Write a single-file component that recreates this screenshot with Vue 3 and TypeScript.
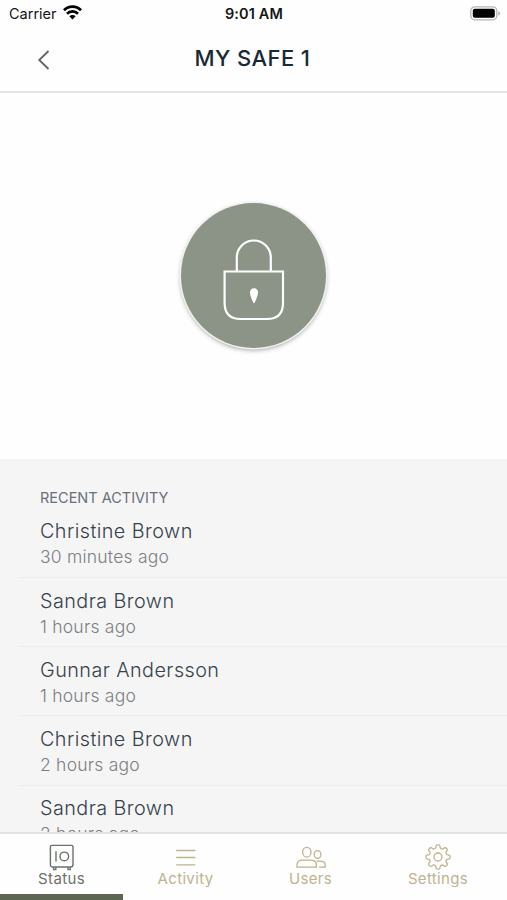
<script setup lang="ts">
interface Activity {
  name: string
  time: string
}

const activities: Activity[] = [
  { name: 'Christine Brown', time: '30 minutes ago' },
  { name: 'Sandra Brown', time: '1 hours ago' },
  { name: 'Gunnar Andersson', time: '1 hours ago' },
  { name: 'Christine Brown', time: '2 hours ago' },
  { name: 'Sandra Brown', time: '2 hours ago' },
]

// Outline of an eight-toothed cog with soft shoulders.
function cogPath(center: number, radius: number, depth: number): string {
  const steps = 128
  const points = Array.from({ length: steps }, (_, i) => {
    const angle = (i / steps) * Math.PI * 2
    const r = radius + depth * Math.tanh(2.4 * Math.cos(8 * angle))
    return `${(center + r * Math.sin(angle)).toFixed(2)} ${(center - r * Math.cos(angle)).toFixed(2)}`
  })
  return `M${points.join('L')}Z`
}

const cog = cogPath(14, 10.5, 1.6)
</script>

<template>
  <div class="screen">
    <div class="statusbar">
      <div class="carrier">
        <span>Carrier</span>
        <svg class="wifi" width="19" height="15" viewBox="0 0 19 15" fill="none" stroke="#000" stroke-width="2.7">
          <path d="M1 5.2A12 12 0 0 1 18 5.2" />
          <path d="M4 8.7A7.8 7.8 0 0 1 15 8.7" />
          <path d="M9.5 14.4 6.4 11.3A4.4 4.4 0 0 1 12.6 11.3Z" fill="#000" stroke="none" />
        </svg>
      </div>
      <span class="clock">9:01 AM</span>
      <svg class="battery" width="31" height="15" viewBox="0 0 31 15">
        <rect x="0.8" y="0.8" width="26" height="13" rx="4" fill="#fff" stroke="#b5b5b5" stroke-width="1.3" />
        <rect x="2.8" y="2.8" width="22" height="9" rx="2" fill="#000" />
        <path d="M28.4 5.2C30.5 6 30.5 8.7 28.4 9.5Z" fill="#aaa" />
      </svg>
    </div>

    <header class="header">
      <button class="back" aria-label="Back">
        <svg width="14" height="20" viewBox="0 0 14 20" fill="none" stroke="#62645f" stroke-width="1.8">
          <path d="M11.5 1 2.2 10 11.5 19" />
        </svg>
      </button>
      <h1>MY SAFE 1</h1>
    </header>

    <section class="hero">
      <button class="lock" aria-label="Unlock">
        <svg width="62" height="82" viewBox="0 0 62 82" fill="none" stroke="#fff" stroke-width="2.2">
          <path d="M13.8 32V18.5A17 17 0 0 1 47.8 18.5V32" />
          <path d="M1.6 32.5H60V64Q60 80 44 80H17.6Q1.6 80 1.6 64Z" />
          <path d="M31 49.2C33.8 49.2 35.4 51.5 35 54.2 34.6 57 32.9 60.8 32 63.2Q31 65 30 63.2C29.1 60.8 27.4 57 27 54.2 26.6 51.5 28.2 49.2 31 49.2Z" fill="#fff" stroke="none" />
        </svg>
      </button>
    </section>

    <section class="recent">
      <h2>RECENT ACTIVITY</h2>
      <ul>
        <li v-for="(item, i) in activities" :key="i">
          <div class="name">{{ item.name }}</div>
          <div class="time">{{ item.time }}</div>
        </li>
      </ul>
    </section>

    <nav class="tabs">
      <div class="tab active">
        <svg width="28" height="28" viewBox="0 0 28 28" fill="none" stroke="currentColor" stroke-width="1.4">
          <path d="M3.8 2.4H23.6Q25 2.4 25 3.8V21.5Q25 24 22.5 24H4.9Q2.4 24 2.4 21.5V3.8Q2.4 2.4 3.8 2.4ZM5.6 24V26.6H7.8V24M20 24V26.6H22.2V24M8 8.2V18.6" />
          <circle cx="16.3" cy="13.4" r="4.3" />
        </svg>
        <span>Status</span>
      </div>
      <div class="tab">
        <svg width="28" height="28" viewBox="0 0 28 28" fill="none" stroke="currentColor" stroke-width="1.3">
          <path d="M4.2 7.5H23.4M4.2 14.5H23.4M4.2 21.8H23.4" />
        </svg>
        <span>Activity</span>
      </div>
      <div class="tab">
        <svg width="30" height="28" viewBox="0 0 30 28" fill="none" stroke="currentColor" stroke-width="1.3">
          <ellipse cx="10.8" cy="9.2" rx="4.2" ry="4.9" />
          <path d="M1 24.2V21.8C1 18.8 3.5 17.2 7 17.2H14.4C17.9 17.2 20.4 18.8 20.4 21.8V24.2Z" />
          <ellipse cx="21.5" cy="11.5" rx="3.4" ry="3.9" />
          <path d="M20.5 18.2H23.5C27 18.2 29.2 19.6 29.2 21.9V24.2H23" />
        </svg>
        <span>Users</span>
      </div>
      <div class="tab">
        <svg width="28" height="28" viewBox="0 0 28 28" fill="none" stroke="currentColor" stroke-width="1.3" stroke-linejoin="round">
          <path :d="cog" />
          <circle cx="14" cy="14" r="4" />
        </svg>
        <span>Settings</span>
      </div>
    </nav>
  </div>
</template>

<style>
body {
  background: #fff;
}
</style>

<style scoped>
.screen {
  width: 507px;
  height: 900px;
  display: flex;
  flex-direction: column;
  overflow: hidden;
  background: #fefefe;
  font-family: Inter, 'Liberation Sans', sans-serif;
}
button {
  border: 0;
  padding: 0;
  margin: 0;
  background: none;
}
h1,
h2,
ul {
  margin: 0;
  padding: 0;
}
svg {
  display: block;
}
.statusbar {
  height: 28px;
  flex: none;
  box-sizing: border-box;
  padding: 0 6px 0 9px;
  display: grid;
  grid-template-columns: 1fr auto 1fr;
  align-items: center;
  color: #161616;
}
.carrier {
  display: flex;
  align-items: center;
  gap: 6px;
  font-size: 14.5px;
}
.carrier span,
.clock {
  margin-top: -1px;
}
.wifi {
  margin-top: -3px;
}
.clock {
  font-size: 14.5px;
  font-weight: 600;
  letter-spacing: 0.15px;
  margin-right: 2px;
}
.battery {
  justify-self: end;
  margin-top: -2px;
}
.header {
  height: 65px;
  flex: none;
  box-sizing: border-box;
  border-bottom: 2px solid #e4e4e4;
  display: grid;
  grid-template-columns: 80px 1fr 82px;
  align-items: center;
  padding-bottom: 4px;
}
.back {
  margin: 5px 0 0 37px;
  width: 14px;
}
h1 {
  font-size: 22px;
  line-height: 28px;
  font-weight: 550;
  letter-spacing: 0.4px;
  color: #182935;
  text-align: center;
}
.hero {
  height: 366px;
  flex: none;
  box-sizing: border-box;
  padding-bottom: 1px;
  display: flex;
  align-items: center;
  justify-content: center;
}
.lock {
  width: 145px;
  height: 145px;
  border-radius: 50%;
  background: #8b9487;
  box-shadow: 0 0 0 1.5px #f1f3f0, 0 2px 5px rgba(0, 0, 0, 0.4);
  display: flex;
  align-items: center;
  justify-content: center;
  padding-top: 9px;
  box-sizing: border-box;
}
.recent {
  flex: 1;
  min-height: 0;
  overflow: hidden;
  background: #f5f5f5;
  padding-top: 29px;
}
h2 {
  padding-left: 40px;
  font-size: 14.5px;
  line-height: 20px;
  font-weight: 400;
  color: #697078;
}
ul {
  list-style: none;
}
li {
  height: 69.2px;
  box-sizing: border-box;
  margin-left: 20px;
  padding: 9.5px 0 0 20px;
  border-bottom: 1px solid #ebecec;
}
li:first-child {
  height: 70px;
  padding-top: 10.3px;
}
.name {
  font-size: 19.8px;
  line-height: 26px;
  font-weight: 330;
  letter-spacing: 0.44px;
  color: #36424a;
}
.time {
  font-size: 17.5px;
  line-height: 25px;
  font-weight: 330;
  letter-spacing: 0.22px;
  color: #7b8083;
}
.tabs {
  height: 68px;
  flex: none;
  box-sizing: border-box;
  border-top: 2px solid #e2e2e2;
  display: grid;
  grid-template-columns: 123px 125px 125px 130px;
  background: #fefefe;
}
.tab {
  display: flex;
  flex-direction: column;
  align-items: center;
  padding-top: 9px;
  color: #beb48f;
}
.tab span {
  font-size: 15px;
  line-height: 16px;
  letter-spacing: 0.35px;
}
.active {
  color: #6c726b;
  border-bottom: 6px solid #5c6652;
}
</style>
